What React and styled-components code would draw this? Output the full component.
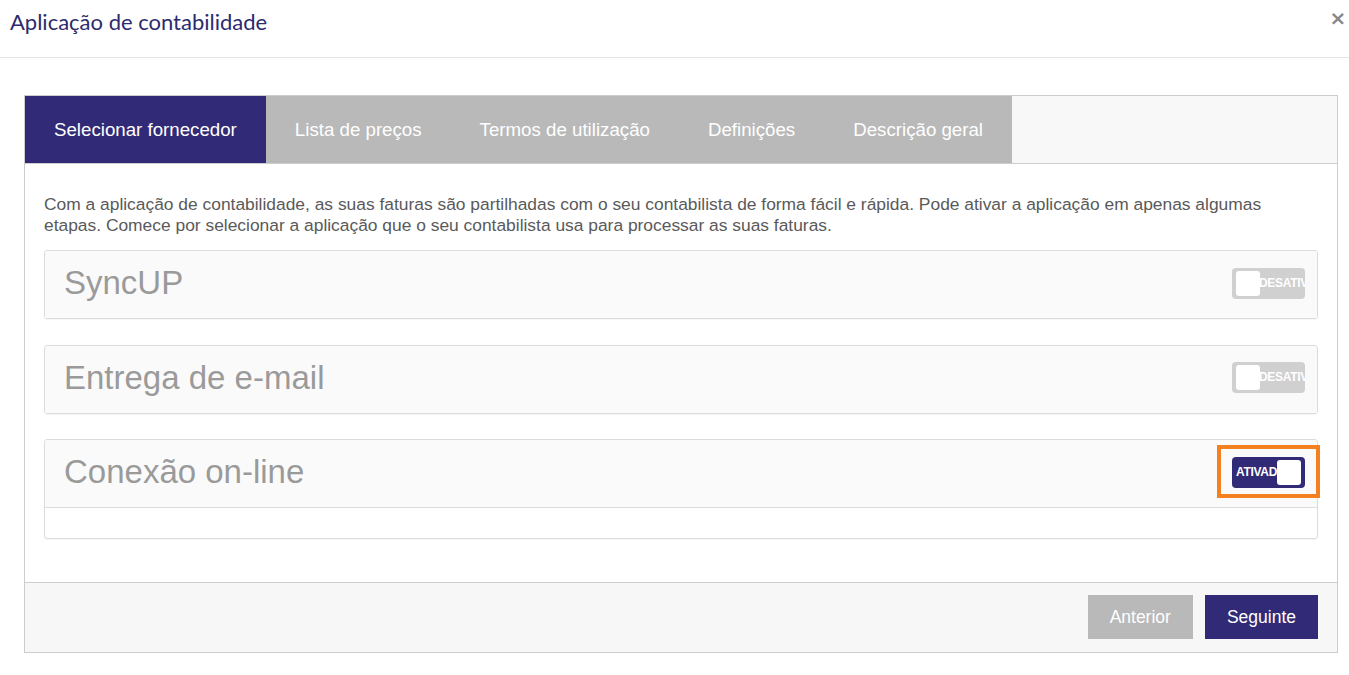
import React, { useState } from "react";
import styled, { createGlobalStyle } from "styled-components";

const Global = createGlobalStyle`
  html, body { margin: 0; padding: 0; background: #fff; }
  body { font-family: "Liberation Sans", Arial, sans-serif; }
`;

const PURPLE = "#312a76";
const GREY = "#b9b9b9";

const Header = styled.div`
  height: 57px;
  border-bottom: 1px solid #e5e5e5;
  display: flex;
  align-items: center;
  justify-content: space-between;
  padding: 0 0 0 10px;
`;

const Title = styled.h1`
  margin: 0 0 14px;
  font-family: Lato, "Liberation Sans", sans-serif;
  font-weight: 400;
  font-size: 22px;
  color: #2d2a6e;
`;

const Close = styled.button`
  border: 0;
  background: none;
  padding: 0;
  width: 20px;
  height: 20px;
  margin: 0 1px 22px 0;
  color: #888;
  font-size: 20px;
  font-weight: 700;
  line-height: 20px;
  font-family: "DejaVu Sans", sans-serif;
  cursor: pointer;
`;

const Panel = styled.div`
  margin: 37px 11px 0 24px;
  border: 1px solid #cdcdcd;
`;

const TabBar = styled.div`
  display: flex;
  height: 67px;
  background: #f8f8f8;
  border-bottom: 1px solid #cdcdcd;
`;

const Tab = styled.div`
  display: flex;
  align-items: center;
  padding: 0 29px;
  font-size: 18.7px;
  color: #fff;
  background: ${(p) => (p.$active ? PURPLE : GREY)};
`;

const Body = styled.div`
  padding: 30px 19px 43px 19px;
`;

const Intro = styled.p`
  margin: 0 0 14px;
  font-size: 17.4px;
  line-height: 21px;
  color: #5a5a5a;
`;

const Cards = styled.div`
  display: flex;
  flex-direction: column;
  gap: 25.5px;
`;

const Card = styled.div`
  border: 1px solid #dcdcdc;
  border-radius: 3px;
  background: #fff;
  box-shadow: 0 1px 1px rgba(0, 0, 0, 0.04);
`;

const CardHead = styled.div`
  height: 67px;
  display: flex;
  align-items: center;
  justify-content: space-between;
  padding: 0 12px 0 19px;
  background: #fafafa;
  border-bottom: ${(p) => (p.$open ? "1px solid #dcdcdc" : "0")};
  border-radius: 3px 3px 0 0;
`;

const CardTitle = styled.span`
  font-size: 33px;
  color: #9a9a9a;
  margin-top: -3px;
`;

const CardBody = styled.div`
  height: 30px;
`;

const ToggleFrame = styled.div`
  position: relative;
  margin-top: -3px;

  &::after {
    content: "";
    display: ${(p) => (p.$marked ? "block" : "none")};
    position: absolute;
    top: -12px;
    bottom: -10px;
    left: -15px;
    right: -15px;
    border: 4px solid #f5801f;
    pointer-events: none;
  }
`;

const Toggle = styled.button`
  position: relative;
  display: block;
  width: 73px;
  height: 31px;
  border: 0;
  border-radius: 4px;
  padding: 0;
  overflow: hidden;
  background: ${(p) => (p.$on ? PURPLE : "#d0d0d0")};
  cursor: pointer;
`;

const ToggleText = styled.span`
  position: absolute;
  top: 8px;
  left: ${(p) => (p.$on ? "4px" : "27px")};
  font-family: "Liberation Sans", Arial, sans-serif;
  font-weight: 700;
  font-size: 12px;
  color: #fff;
  white-space: nowrap;
  letter-spacing: -0.3px;
`;

const Knob = styled.span`
  position: absolute;
  top: 3px;
  left: ${(p) => (p.$on ? "45px" : "4px")};
  width: 24px;
  height: 25px;
  border-radius: 3px;
  background: #fff;
`;

const Footer = styled.div`
  display: flex;
  justify-content: flex-end;
  gap: 12px;
  padding: 12px 19px 13px;
  background: #f7f7f7;
  border-top: 1px solid #cdcdcd;
`;

const Btn = styled.button`
  height: 44px;
  padding: 0 22px;
  border: 0;
  font-family: "Liberation Sans", Arial, sans-serif;
  font-size: 17.5px;
  color: #fff;
  background: ${(p) => (p.$primary ? PURPLE : GREY)};
  cursor: pointer;
`;

const tabs = [
  "Selecionar fornecedor",
  "Lista de preços",
  "Termos de utilização",
  "Definições",
  "Descrição geral",
];

const providers = [
  { name: "SyncUP", on: false },
  { name: "Entrega de e-mail", on: false },
  { name: "Conexão on-line", on: true },
];

function Switch({ on, onClick }) {
  return (
    <ToggleFrame $marked={on}>
      <Toggle $on={on} onClick={onClick}>
        <ToggleText $on={on}>{on ? "ATIVADO" : "DESATIVADO"}</ToggleText>
        <Knob $on={on} />
      </Toggle>
    </ToggleFrame>
  );
}

export default function App() {
  const [items, setItems] = useState(providers);
  const flip = (i) =>
    setItems((list) => list.map((it, j) => (j === i ? { ...it, on: !it.on } : it)));

  return (
    <>
      <Global />
      <Header>
        <Title>Aplicação de contabilidade</Title>
        <Close>×</Close>
      </Header>
      <Panel>
        <TabBar>
          {tabs.map((t, i) => (
            <Tab key={t} $active={i === 0}>
              {t}
            </Tab>
          ))}
        </TabBar>
        <Body>
          <Intro>
            Com a aplicação de contabilidade, as suas faturas são partilhadas com o seu
            contabilista de forma fácil e rápida. Pode ativar a aplicação em apenas algumas
            etapas. Comece por selecionar a aplicação que o seu contabilista usa para
            processar as suas faturas.
          </Intro>
          <Cards>
            {items.map((it, i) => (
              <Card key={it.name}>
                <CardHead $open={it.on}>
                  <CardTitle>{it.name}</CardTitle>
                  <Switch on={it.on} onClick={() => flip(i)} />
                </CardHead>
                {it.on && <CardBody />}
              </Card>
            ))}
          </Cards>
        </Body>
        <Footer>
          <Btn>Anterior</Btn>
          <Btn $primary>Seguinte</Btn>
        </Footer>
      </Panel>
    </>
  );
}
